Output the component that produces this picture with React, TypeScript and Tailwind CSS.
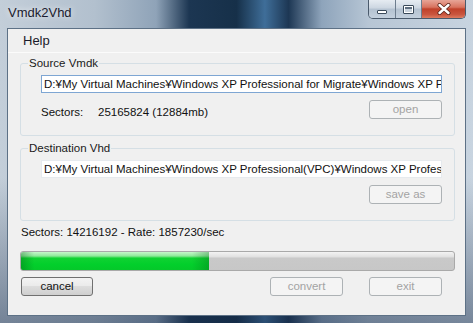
import React from "react";

const font = { fontFamily: '"Liberation Sans", "Noto Sans CJK JP", sans-serif' };

function DisabledButton({ label, w }: { label: string; w: string }) {
  return (
    <div
      className={`${w} h-[19px] flex items-center justify-center rounded-[3px] border border-[#adb2b5] bg-[#f4f4f4] text-[11.5px] text-[#a3a3a3]`}
    >
      {label}
    </div>
  );
}

function GroupBox({
  title,
  path,
  button,
  focused,
  children,
}: {
  title: string;
  path: string;
  button: string;
  focused?: boolean;
  children?: React.ReactNode;
}) {
  return (
    <div className="relative h-[73px] rounded-[3px] border border-[#d5dfe5] pl-[20px] pr-[12px] pt-[11px]">
      <div className="absolute -top-[8px] left-[7px] bg-[#f0f0f0] px-[1px] text-[11.5px] leading-[14px] text-[#1a1a1a]">
        {title}
      </div>
      <div
        className={`h-[18px] overflow-hidden whitespace-nowrap border bg-white pl-[2px] text-[11.5px] leading-[16px] text-[#111] ${
          focused ? "border-[#7ea6d3]" : "border-[#e6eaee]"
        }`}
      >
        {path}
      </div>
      <div className="mt-[7px] flex items-start">
        <div className="flex-1">{children}</div>
        <DisabledButton label={button} w="w-[73px]" />
      </div>
    </div>
  );
}

export default function App() {
  return (
    <div
      className="relative flex h-[323px] w-[473px] flex-col overflow-hidden bg-[linear-gradient(90deg,#c3ced9_0%,#b2c0ce_20%,#8fa3b8_33%,#1c3652_40%,#163049_50%,#3f6e99_56%,#1d3754_61%,#8ea4bb_68%,#b7c6d5_78%,#c8d4e0_100%)]"
      style={font}
    >
      {/* side/bottom shading */}
      <div className="pointer-events-none absolute inset-0 bg-[linear-gradient(180deg,rgba(255,255,255,0)_0%,rgba(255,255,255,0)_55%,rgba(20,40,70,0.45)_100%)]" />
      {/* title bar */}
      <div className="relative flex h-[28px] items-start">
        <div className="pl-[8px] pt-[5px] text-[13px] leading-[16px] text-[#1b1b2e] [text-shadow:0_0_6px_rgba(255,255,255,0.9)]">
          Vmdk2Vhd
        </div>
        <div className="ml-auto mr-[7px] flex h-[19px] overflow-hidden rounded-b-[5px] border border-t-0 border-[#4a5a6c]">
          <div className="flex w-[27px] items-center justify-center border-r border-[#6d7d8e] bg-[linear-gradient(180deg,#e6ecf2_0%,#ccd6e1_45%,#b4c2d1_50%,#c3d0dd_100%)]">
            <div className="mt-[6px] h-[4px] w-[10px] rounded-[1px] border border-[#3a4a5a] bg-white" />
          </div>
          <div className="flex w-[26px] items-center justify-center border-r border-[#6d7d8e] bg-[linear-gradient(180deg,#e6ecf2_0%,#ccd6e1_45%,#b4c2d1_50%,#c3d0dd_100%)]">
            <div className="h-[9px] w-[11px] rounded-[1px] border border-[#3a4a5a] bg-white p-[1px]">
              <div className="h-full w-full border-t-[2px] border-[#5f6f80] bg-[#c9d3dd]" />
            </div>
          </div>
          <div className="flex w-[43px] items-center justify-center bg-[linear-gradient(180deg,#e7a597_0%,#d8735f_40%,#c0412a_50%,#c9553e_80%,#dd7b60_100%)]">
            <svg width="14" height="12" viewBox="0 0 14 12">
              <path d="M2.5 2 L11.5 10 M11.5 2 L2.5 10" stroke="#5a2418" strokeWidth="4" strokeLinecap="round" />
              <path d="M2.5 2 L11.5 10 M11.5 2 L2.5 10" stroke="#ffffff" strokeWidth="2.4" strokeLinecap="round" />
            </svg>
          </div>
        </div>
      </div>

      {/* client area */}
      <div className="relative mx-[7px] flex h-[288px] flex-col border border-[#5d7186] bg-[#f0f0f0] text-[#111]">
        <div className="flex h-[24px] items-center border-b border-[#fbfbfb] bg-[#f0f0f0] pl-[15px] text-[13px] text-[#1a1a2a]">
          Help
        </div>
        <div className="flex flex-1 flex-col pl-[12px] pr-[10px]">
          <div className="mt-[10px]">
            <GroupBox
              title="Source Vmdk"
              path="D:¥My Virtual Machines¥Windows XP Professional for Migrate¥Windows XP Professional.vmdk"
              button="open"
              focused
            >
              <div className="mt-[5px] flex text-[11.5px] leading-[14px]">
                <span className="w-[57px]">Sectors:</span>
                <span>25165824 (12884mb)</span>
              </div>
            </GroupBox>
          </div>
          <div className="mt-[12px]">
            <GroupBox
              title="Destination Vhd"
              path="D:¥My Virtual Machines¥Windows XP Professional(VPC)¥Windows XP Professional.vhd"
              button="save as"
            />
          </div>
          <div className="ml-[1px] mt-[4px] text-[11.5px] leading-[14px]">
            Sectors: 14216192 - Rate: 1857230/sec
          </div>
          <div className="mt-[12px] h-[20px] overflow-hidden rounded-[3px] border border-[#a9a9a9] bg-[linear-gradient(180deg,#f3f3f3_0%,#e2e2e2_25%,#c9c9c9_35%,#c7c7c7_100%)]">
            <div className="h-full w-[188px] bg-[linear-gradient(90deg,rgba(0,90,20,0.35)_0%,rgba(0,90,20,0)_7%,rgba(0,90,20,0)_91%,rgba(0,90,20,0.3)_100%),linear-gradient(180deg,#c6f6cb_0%,#8fe99a_22%,#10d232_34%,#02cf2b_70%,#05c82a_100%)]" />
          </div>
          <div className="mt-[6px] flex pr-[13px]">
            <div className="ml-[1px] flex h-[19px] w-[72px] items-center justify-center rounded-[3px] border border-[#707070] bg-[linear-gradient(180deg,#f3f3f3_0%,#ebebeb_45%,#dddddd_50%,#cfcfcf_100%)] text-[11.5px] text-[#111]">
              cancel
            </div>
            <div className="ml-auto">
              <DisabledButton label="convert" w="w-[73px]" />
            </div>
            <div className="ml-[26px]">
              <DisabledButton label="exit" w="w-[73px]" />
            </div>
          </div>
        </div>
      </div>
    </div>
  );
}
